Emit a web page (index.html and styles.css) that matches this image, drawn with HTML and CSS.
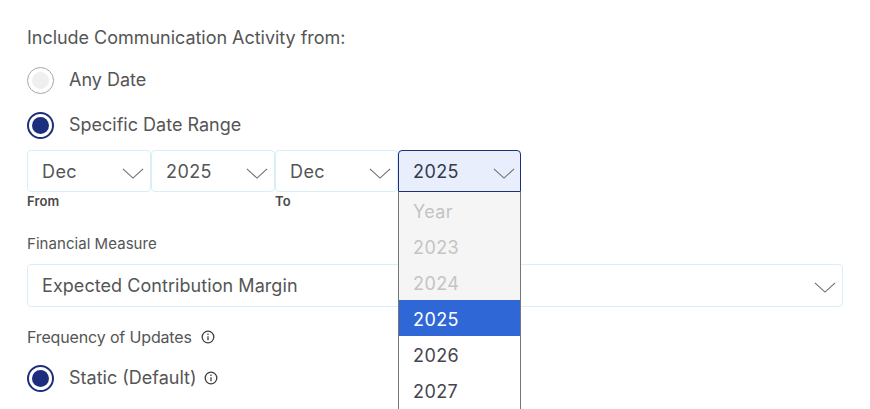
FILE: index.html
```html
<!DOCTYPE html>
<html lang="en">

<head>
    <meta charset="utf-8">
    <title>Communication Activity</title>
    <link rel="stylesheet" href="styles.css">
</head>

<body>
<div class="form-wrapper">
    <div class="section-title">Include Communication Activity from:</div>

    <div class="radio-row first">
        <span class="radio disabled"></span>
        <span class="radio-label">Any Date</span>
    </div>
    <div class="radio-row second">
        <span class="radio checked"></span>
        <span class="radio-label">Specific Date Range</span>
    </div>

    <div class="date-range">
        <div class="date-field">
            <div class="select">
                <span>Dec</span>
                <svg class="chevron" viewBox="0 0 24 12"><path d="M1 1l11 10L23 1"/></svg>
            </div>
            <div class="field-hint">From</div>
        </div>
        <div class="date-field">
            <div class="select">
                <span>2025</span>
                <svg class="chevron" viewBox="0 0 24 12"><path d="M1 1l11 10L23 1"/></svg>
            </div>
        </div>
        <div class="date-field">
            <div class="select">
                <span>Dec</span>
                <svg class="chevron" viewBox="0 0 24 12"><path d="M1 1l11 10L23 1"/></svg>
            </div>
            <div class="field-hint">To</div>
        </div>
        <div class="date-field open">
            <div class="select active">
                <span>2025</span>
                <svg class="chevron" viewBox="0 0 24 12"><path d="M1 1l11 10L23 1"/></svg>
            </div>
            <ul class="dropdown">
                <li class="off">Year</li>
                <li class="off">2023</li>
                <li class="off">2024</li>
                <li class="selected">2025</li>
                <li>2026</li>
                <li>2027</li>
            </ul>
        </div>
    </div>

    <div class="field-title">Financial Measure</div>
    <div class="select wide">
        <span>Expected Contribution Margin</span>
        <svg class="chevron" viewBox="0 0 24 12"><path d="M1 1l11 10L23 1"/></svg>
    </div>

    <div class="field-title freq">
        Frequency of Updates
        <svg class="info" viewBox="0 0 14 14"><circle cx="7" cy="7" r="5.8"/><path d="M7 6.3v4"/><path d="M7 3.6v1.4"/></svg>
    </div>
    <div class="radio-row static">
        <span class="radio checked"></span>
        <span class="radio-label">Static (Default)</span>
        <svg class="info" viewBox="0 0 14 14"><circle cx="7" cy="7" r="5.8"/><path d="M7 6.3v4"/><path d="M7 3.6v1.4"/></svg>
    </div>
</div>
</body>

</html>
```

FILE: styles.css
```css
html,
body {
    height: 100%;
    margin: 0;
    overflow: hidden;
    background: #ffffff;
}

body {
    font-family: Inter, "Open Sans", Arial, sans-serif;
    color: #555555;
}

.form-wrapper {
    width: 816px;
    padding: 27px 0 0 27px;
}

.section-title {
    font-size: 18px;
    line-height: 21px;
    letter-spacing: -0.03px;
}

.radio-row {
    display: flex;
    align-items: center;
    height: 28px;
    font-size: 18px;
}

.radio-row.first {
    margin-top: 18px;
}

.radio-row.second {
    margin-top: 17px;
}

.radio-row.static {
    margin-top: 17px;
}

.radio-row .info {
    margin-left: 7px;
}

.radio-label {
    margin-left: 15px;
    padding-bottom: 2px;
}

.radio {
    box-sizing: border-box;
    width: 27px;
    height: 27px;
    border-radius: 50%;
    border: 1px solid #a6a6a6;
    display: flex;
    align-items: center;
    justify-content: center;
}

.radio::after {
    content: "";
    width: 17px;
    height: 17px;
    border-radius: 50%;
    background: #efefef;
}

.radio.checked {
    border: 2px solid #1c2f7d;
}

.radio.checked::after {
    background: #1c2f7d;
}

.date-range {
    display: flex;
    margin-top: 11px;
}

.date-field {
    width: 124px;
    flex: none;
}

.date-field:nth-child(3) {
    width: 123px;
}

.date-field.open {
    position: relative;
    width: 123px;
}

.select {
    box-sizing: border-box;
    height: 42px;
    padding: 0 6px 0 14px;
    display: flex;
    align-items: center;
    justify-content: space-between;
    border: 1px solid #d8eef8;
    border-radius: 4px;
    font-size: 18px;
    letter-spacing: 0.4px;
}

.select.active {
    padding-right: 5px;
    border-color: #1c2f7d;
    background: #e8eefc;
    color: #333a4d;
    border-radius: 4px 4px 0 0;
}

.select.wide {
    height: 43px;
    margin-top: 10px;
    letter-spacing: 0.06px;
}

.chevron {
    width: 22px;
    height: 11px;
    fill: none;
    stroke: #6f6f6f;
    stroke-width: 1.2;
    margin-top: 4px;
}

.field-hint {
    font-size: 13px;
    font-weight: 600;
    line-height: 18px;
    letter-spacing: 0.1px;
    color: #4a4a4a;
}

.field-title {
    font-size: 15px;
    line-height: 20px;
    letter-spacing: 0.05px;
    margin-top: 24px;
}

.field-title.freq {
    display: flex;
    align-items: center;
    font-size: 16px;
    letter-spacing: -0.15px;
    margin-top: 20px;
}

.info {
    width: 14px;
    height: 14px;
    margin-left: 9px;
    fill: none;
    stroke: #3f3f3f;
    stroke-width: 1.3;
}

.dropdown {
    position: absolute;
    top: 42px;
    left: 0;
    right: 0;
    margin: 0;
    padding: 0 0 6px;
    list-style: none;
    box-sizing: border-box;
    border: 1px solid #767676;
    border-top: 0;
    background: #ffffff;
    font-size: 18px;
    letter-spacing: 0.4px;
    color: #45454f;
}

.dropdown li {
    height: 36px;
    line-height: 40px;
    padding-left: 14px;
}

.dropdown li.off {
    background: #f5f5f5;
    color: #c4c4c4;
}

.dropdown li.selected {
    background: #2f67d6;
    color: #ffffff;
}
```
